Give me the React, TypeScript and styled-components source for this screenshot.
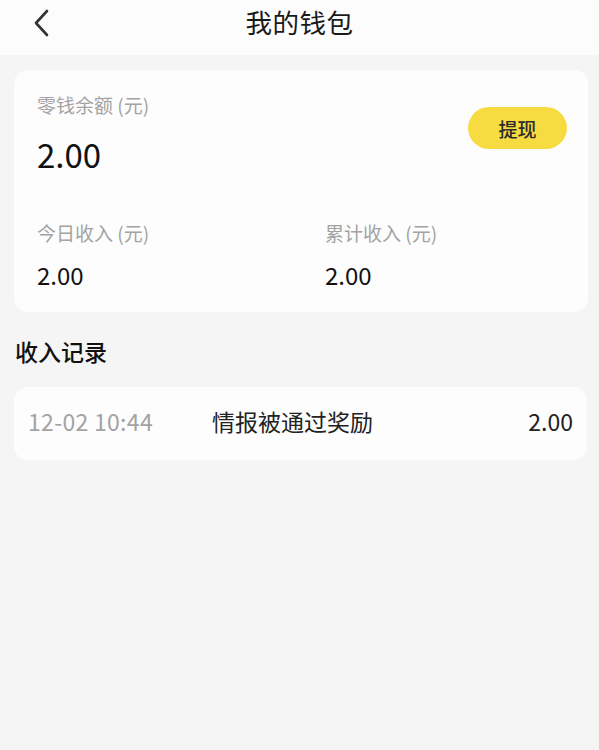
import React from "react";
import styled, { createGlobalStyle } from "styled-components";

const GlobalStyle = createGlobalStyle`
  html, body {
    margin: 0;
    padding: 0;
    background: #f5f5f5;
    font-family: "Noto Sans CJK SC", "Noto Sans", Roboto, sans-serif;
  }
  * { box-sizing: border-box; }
`;

const Page = styled.div`
  width: 599px;
  min-height: 750px;
  background: #f5f5f5;
  display: flex;
  flex-direction: column;
`;

const Header = styled.header`
  height: 55px;
  background: #fcfcfc;
  display: grid;
  grid-template-columns: 80px 1fr 80px;
  align-items: center;
`;

const BackButton = styled.button`
  border: none;
  background: transparent;
  padding: 0 0 0 33px;
  height: 44px;
  display: flex;
  align-items: center;
  margin-top: -10px;
  cursor: pointer;
`;

const Title = styled.h1`
  margin: 0;
  margin-top: -12px;
  text-align: center;
  font-size: 26.5px;
  font-weight: 400;
  color: #1a1a1a;
  letter-spacing: 0.5px;
`;

const Content = styled.main`
  padding: 15px 11px 0 14px;
  display: flex;
  flex-direction: column;
`;

const Card = styled.section`
  background: #fdfdfd;
  border-radius: 14px;
`;

const WalletCard = styled(Card)`
  padding: 22px 21px 20px 23px;
  display: flex;
  flex-direction: column;
`;

const TopRow = styled.div`
  display: flex;
  justify-content: space-between;
  align-items: flex-start;
`;

const Stat = styled.div<{ $gap: number }>`
  display: flex;
  flex-direction: column;
  gap: ${(p) => p.$gap}px;
`;

const Label = styled.div`
  font-size: 19px;
  line-height: 26px;
  color: #a3a3a3;
`;

const Amount = styled.div<{ $size: number; $lh: number }>`
  font-size: ${(p) => p.$size}px;
  line-height: ${(p) => p.$lh}px;
  color: #111;
  font-weight: 400;
`;

const WithdrawButton = styled.button`
  margin-top: 15px;
  width: 99px;
  height: 42px;
  border: none;
  border-radius: 21px;
  background: #f6dc40;
  color: #2b2b2b;
  font-family: inherit;
  font-size: 19px;
  font-weight: 500;
  cursor: pointer;
`;

const BottomRow = styled.div`
  margin-top: 44px;
  display: grid;
  grid-template-columns: 288px 1fr;
`;

const SectionTitle = styled.h2`
  margin: 24px 0 0 1px;
  font-size: 23px;
  line-height: 30px;
  font-weight: 500;
  color: #111;
`;

const RecordCard = styled(Card)`
  margin-top: 21px;
  margin-right: 1px;
  height: 73px;
  padding: 0 14px 5px 14px;
  display: grid;
  grid-template-columns: 184px 1fr auto;
  align-items: center;
`;

const RecordTime = styled.span`
  font-size: 23px;
  letter-spacing: 0.3px;
  color: #a3a3a3;
`;

const RecordDesc = styled.span`
  font-size: 23px;
  color: #222;
`;

const RecordAmount = styled.span`
  font-size: 23px;
  color: #222;
`;

const ChevronLeft = () => (
  <svg width="16" height="28" viewBox="0 0 16 28" fill="none">
    <path d="M14 2 L3 14 L14 26" stroke="#333" strokeWidth="2.6" strokeLinecap="round" strokeLinejoin="round" />
  </svg>
);

export default function App() {
  return (
    <Page>
      <GlobalStyle />
      <Header>
        <BackButton aria-label="返回">
          <ChevronLeft />
        </BackButton>
        <Title>我的钱包</Title>
        <div />
      </Header>
      <Content>
        <WalletCard>
          <TopRow>
            <Stat $gap={14}>
              <Label>零钱余额 (元)</Label>
              <Amount $size={33} $lh={44}>2.00</Amount>
            </Stat>
            <WithdrawButton>提现</WithdrawButton>
          </TopRow>
          <BottomRow>
            <Stat $gap={12}>
              <Label>今日收入 (元)</Label>
              <Amount $size={24} $lh={34}>2.00</Amount>
            </Stat>
            <Stat $gap={12}>
              <Label>累计收入 (元)</Label>
              <Amount $size={24} $lh={34}>2.00</Amount>
            </Stat>
          </BottomRow>
        </WalletCard>
        <SectionTitle>收入记录</SectionTitle>
        <RecordCard>
          <RecordTime>12-02 10:44</RecordTime>
          <RecordDesc>情报被通过奖励</RecordDesc>
          <RecordAmount>2.00</RecordAmount>
        </RecordCard>
      </Content>
    </Page>
  );
}
